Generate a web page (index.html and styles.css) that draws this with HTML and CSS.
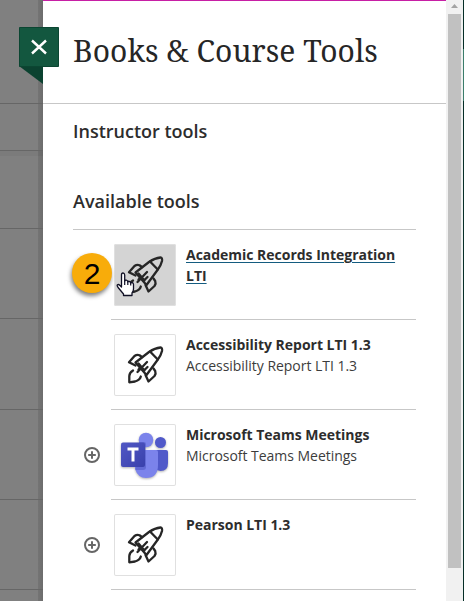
FILE: index.html
```html
<!DOCTYPE html>
<html lang="en">
<head>
  <meta charset="UTF-8" />
  <meta name="viewport" content="width=device-width, initial-scale=1.0" />
  <title>Books &amp; Course Tools</title>
  <link rel="stylesheet" href="styles.css">
</head>
<body>
  <svg class="defs" width="0" height="0">
    <symbol id="rocket" viewBox="0 0 62 62">
      <g fill="none" stroke="#262626" stroke-width="2.300" stroke-linecap="round" stroke-linejoin="round">
        <path d="M21.500 28.500L35 18Q41 14 46.500 13.500Q48.500 13.500 48 17Q47 21.500 43.500 26L32.500 41Z" />
        <path d="M36 17.500L43.800 25.500" />
        <path d="M28 23L25.500 21.200Q23 20.200 20.500 22L15 28.300L21.500 31.500" />
        <path d="M39.500 34.500L41.200 37Q42.200 39.500 40.500 42L34.500 47.500L31.500 41" />
        <path d="M33 28L23.500 38M24.500 29.500L27.500 33L30.500 36.500M24.500 35.500L27 33M33.500 33L30.500 36" />
        <path d="M19 36.500Q15.500 38.500 15.300 42V48.300L21 47.500Q26 46 26.800 42.500" />
      </g>
    </symbol>
    <symbol id="plus" viewBox="0 0 16 16">
      <circle cx="8" cy="8" r="7" fill="none" stroke="#666" stroke-width="2" />
      <path d="M4.200 8H11.800M8 4.200V11.800" stroke="#666" stroke-width="2" />
    </symbol>
  </svg>

  <div class="app">
    <div class="backdrop">
      <div class="strip header"></div>
      <div class="strip filter"></div>
      <div class="strip first"></div>
      <div class="strip"></div>
      <div class="strip tall"></div>
      <div class="strip"></div>
      <div class="strip"></div>
    </div>

    <main class="panel">
      <button class="close" aria-label="Close">
        <svg width="40" height="57" viewBox="0 0 40 57">
          <path d="M0 39H24V57Z" fill="#0b4230" />
          <path d="M.5 .5H39.500V39.500H.5Z" fill="#13573f" stroke="#0b4632" />
          <path d="M13 13.500L27 26.500M27 13.500L13 26.500" stroke="#fff" stroke-width="2.400" />
        </svg>
      </button>
      <header class="panel-header">
        <h1>Books &amp; Course Tools</h1>
      </header>
      <h2 class="instructor">Instructor tools</h2>
      <h2 class="available">Available tools</h2>
      <ul class="tools">
        <li class="tool active">
          <span class="step">2</span>
          <div class="tool-body">
            <div class="thumb">
              <svg width="62" height="62"><use href="#rocket" /></svg>
              <svg class="cursor" width="19" height="25" viewBox="0 0 19 25">
                <path d="M5.500 15V3Q5.500 1 7 1T8.700 3V9Q9 8 10.300 8.200T11.800 10Q12.200 9 13.300 9.300T14.700 11Q15.200 10.300 16.300 10.700T17.500 12.500V17Q17.500 19 16 21V23.500H7.500V22L2.500 16Q.5 13.500 1.500 12.700Q2.500 12 4 13.500Z" fill="#fff" stroke="#101025" stroke-width="1.300" stroke-linejoin="round" />
                <path d="M8.700 8.500V13M11.800 10V13M14.700 11V13.500" stroke="#101025" stroke-width="1.200" />
              </svg>
            </div>
            <div class="info"><a href="#">Academic Records Integration LTI</a></div>
          </div>
        </li>
        <li class="tool">
          <div class="tool-body">
            <div class="thumb"><svg width="62" height="62"><use href="#rocket" /></svg></div>
            <div class="info"><strong>Accessibility Report LTI 1.3</strong><span>Accessibility Report LTI 1.3</span></div>
          </div>
        </li>
        <li class="tool">
          <svg class="add" width="16" height="16"><use href="#plus" /></svg>
          <div class="tool-body">
            <div class="thumb">
              <svg class="teams" width="62" height="62" viewBox="0 0 62 62">
                <defs>
                  <linearGradient id="square" x2="1" y2="1">
                    <stop stop-color="#5158c5" />
                    <stop offset="1" stop-color="#3940ab" />
                  </linearGradient>
                </defs>
                <circle cx="46.500" cy="18.500" r="5.500" fill="#5059c9" />
                <path d="M40 26H52Q54 26 54 28V39Q54 47 46.500 47Q43 47 40 44Z" fill="#5059c9" />
                <circle cx="32" cy="16" r="7.300" fill="#7b83eb" />
                <path d="M22 26H42Q44 26 44 28V41Q44 54 32 54Q24 54 21 45Z" fill="#7b83eb" />
                <path d="M25 18H30Q32 18 32 20V43Q32 46 29 46H21.500V26H25Z" fill="#343baa" opacity=".35" />
                <rect x="7" y="18.500" width="24" height="24.500" rx="2" fill="url(#square)" />
                <path d="M13.500 25H24.500M19 25V37.500" stroke="#fff" stroke-width="3" />
              </svg>
            </div>
            <div class="info"><strong>Microsoft Teams Meetings</strong><span>Microsoft Teams Meetings</span></div>
          </div>
        </li>
        <li class="tool">
          <svg class="add" width="16" height="16"><use href="#plus" /></svg>
          <div class="tool-body">
            <div class="thumb"><svg width="62" height="62"><use href="#rocket" /></svg></div>
            <div class="info"><strong>Pearson LTI 1.3</strong></div>
          </div>
        </li>
      </ul>
    </main>

    <div class="scrollbar">
      <div class="arrow"></div>
      <div class="thumb-bar"></div>
    </div>
    <div class="edge"></div>
  </div>
</body>
</html>
```

FILE: styles.css
```css
* {
  box-sizing: border-box;
}
body {
  margin: 0;
  font-family: "Open Sans", sans-serif;
  color: #2d2d2d;
  background: #fff;
}
.defs {
  position: absolute;
}
.app {
  display: flex;
  height: 601px;
  overflow: hidden;
}

/* dimmed page behind the panel */
.backdrop {
  width: 43px;
  background: linear-gradient(to right, transparent 38px, #747474 38px, #6d6d6d 43px), #808080;
}
.strip {
  height: 90px;
  border-bottom: 1px solid #666;
}
.strip.header {
  height: 104px;
}
.strip.filter {
  height: 47px;
}
.strip.first {
  height: 78px;
  border-top: 5px solid rgba(0, 0, 0, 0.04);
}
.strip.tall {
  height: 91px;
}

.panel {
  position: relative;
  width: 403px;
  border-top: 1px solid #c71fa5;
}
.close {
  position: absolute;
  left: -24px;
  top: 26px;
  padding: 0;
  border: none;
  background: none;
  cursor: pointer;
}
.close svg {
  display: block;
}
.panel-header {
  height: 103px;
  padding: 28px 30px 0;
  border-bottom: 1px solid #c7c7c7;
}
h1 {
  margin: 0;
  font-family: "Noto Serif", "DejaVu Serif", serif;
  font-size: 30px;
  font-weight: 400;
  line-height: 44px;
  letter-spacing: 0.05px;
  white-space: nowrap;
  color: #262626;
}
h2 {
  margin: 0 30px;
  font-size: 18px;
  font-weight: 600;
  line-height: 26px;
}
.instructor {
  padding-top: 14px;
}
.available {
  padding-top: 44px;
}

.tools {
  list-style: none;
  margin: 15px 30px 0;
  padding: 0;
  border-top: 1px solid #c7c7c7;
}
.tool {
  display: flex;
  justify-content: flex-end;
  position: relative;
}
.tool-body {
  display: flex;
  gap: 10px;
  width: 305px;
  height: 90px;
  padding: 14px 0 0 3px;
  border-bottom: 1px solid #c7c7c7;
}
.thumb {
  position: relative;
  flex: none;
  width: 62px;
  height: 62px;
  border-radius: 2px;
  box-shadow: inset 0 0 0 1px #e0e0e0;
}
.thumb svg {
  display: block;
}
.teams {
  filter: drop-shadow(0 1px 1px rgba(0, 0, 0, 0.3));
}
.active .thumb {
  background: #d4d4d4;
}
.thumb .cursor {
  position: absolute;
  left: 2px;
  top: 28px;
}
.info {
  font-size: 14px;
  line-height: 21px;
}
.info strong,
.info span {
  display: block;
}
.info strong,
.info a {
  font-weight: 700;
  letter-spacing: -0.02px;
}
.info span {
  color: #3c3c3c;
  letter-spacing: -0.03px;
}
.info a {
  color: #2d2d2d;
  text-decoration: underline #145c80 1px;
  text-underline-offset: 2px;
}
.add {
  position: absolute;
  left: 11px;
  top: 37px;
}
.step {
  position: absolute;
  left: -1px;
  top: 23px;
  z-index: 1;
  width: 40px;
  height: 40px;
  border-radius: 50%;
  background: #f8ac0a;
  box-shadow: -1px 3px 4px rgba(0, 0, 0, 0.5);
  color: #000;
  font: 30px/41px "Liberation Sans", sans-serif;
  text-align: center;
}

.scrollbar {
  width: 17px;
  padding: 4px 2px 0;
  background: #f1f1f1;
}
.arrow {
  width: 7px;
  height: 4px;
  margin: 0 auto 6px;
  background: #a3a3a3;
  clip-path: polygon(50% 0, 100% 100%, 0 100%);
}
.thumb-bar {
  height: 554px;
  background: #c1c1c1;
}
.edge {
  width: 1px;
  background: linear-gradient(#062e27 49px, #3b7d6b 49px, #3b7d6b 101px, #062e27 101px);
}
```
